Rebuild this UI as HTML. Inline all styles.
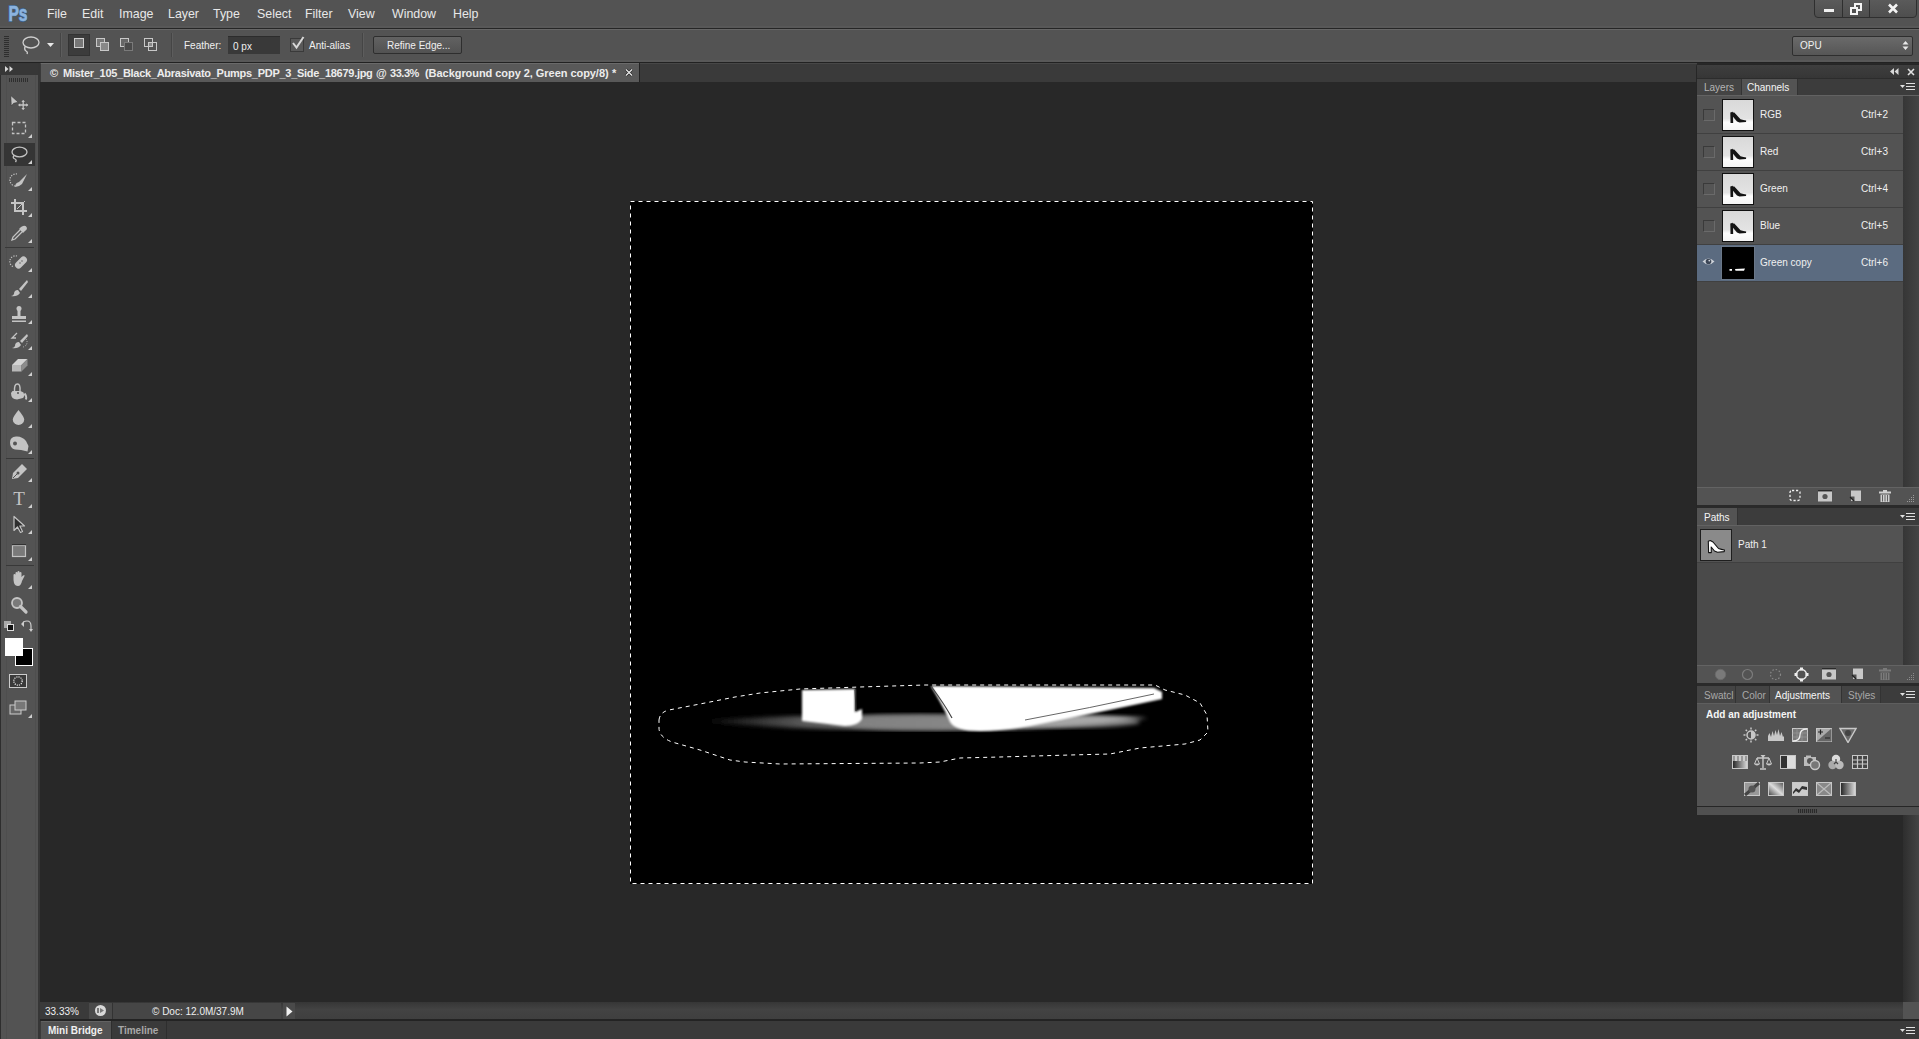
<!DOCTYPE html>
<html><head><meta charset="utf-8">
<style>
*{margin:0;padding:0;box-sizing:border-box}
html,body{width:1919px;height:1039px;overflow:hidden;background:#282828;font-family:"Liberation Sans",sans-serif;}
.a{position:absolute}
.t{position:absolute;white-space:nowrap;color:#e6e6e6}
#menubar{left:0;top:0;width:1919px;height:28px;background:linear-gradient(#535353 0,#535353 26px,#585858 26px)}
#menusep{left:0;top:28px;width:1919px;height:1px;background:#262626}
#opts{left:0;top:29px;width:1919px;height:33px;background:linear-gradient(#666 0,#666 1px,#535353 1px,#535353 31px,#585858 31px)}
#optsep{left:0;top:62px;width:1919px;height:1px;background:#222}
.menu{font-size:12.4px;top:7px;color:#e8e8e8}
</style></head><body>
<div id="menubar" class="a"></div>
<div id="menusep" class="a"></div>
<div id="opts" class="a"></div>
<div id="optsep" class="a"></div>

<!-- Ps logo -->
<svg class="a" style="left:6px;top:2px" width="26" height="22"><text x="2.5" y="19" font-family="Liberation Sans" font-weight="bold" font-size="22" textLength="19" lengthAdjust="spacingAndGlyphs" fill="#3a5f88" stroke="#3a5f88" stroke-width="2.2">Ps</text><text x="2.5" y="19" font-family="Liberation Sans" font-weight="bold" font-size="22" textLength="19" lengthAdjust="spacingAndGlyphs" fill="#8cb3de" stroke="#8cb3de" stroke-width="0.7">Ps</text></svg>
<div class="t menu" style="left:47px">File</div>
<div class="t menu" style="left:82px">Edit</div>
<div class="t menu" style="left:119px">Image</div>
<div class="t menu" style="left:168px">Layer</div>
<div class="t menu" style="left:213px">Type</div>
<div class="t menu" style="left:257px">Select</div>
<div class="t menu" style="left:305px">Filter</div>
<div class="t menu" style="left:348px">View</div>
<div class="t menu" style="left:392px">Window</div>
<div class="t menu" style="left:453px">Help</div>


<!-- options bar content -->
<div class="a" style="left:4px;top:36px;width:5px;height:21px;background:repeating-linear-gradient(#2e2e2e 0 1px,#535353 1px 2px)"></div>
<svg class="a" style="left:20px;top:35px" width="22" height="20" viewBox="0 0 22 20"><ellipse cx="11" cy="7.5" rx="8" ry="5.5" fill="none" stroke="#cfcfcf" stroke-width="1.3"/><path d="M5 11.5 Q4 15 6 16 Q8 17 7 19" fill="none" stroke="#cfcfcf" stroke-width="1.3"/></svg>
<svg class="a" style="left:47px;top:43px" width="8" height="6"><path d="M0 0 H7 L3.5 4 Z" fill="#e8e8e8"/></svg>
<div class="a" style="left:60px;top:33px;width:1px;height:24px;background:#454545"></div>
<div class="a" style="left:61px;top:33px;width:1px;height:24px;background:#5d5d5d"></div>
<div class="a" style="left:68px;top:34px;width:22px;height:22px;background:#3c3c3c;border:1px solid #333"></div>
<div class="a" style="left:74px;top:38px;width:10px;height:10px;border:1px solid #cfcfcf;background:#777"></div>
<svg class="a" style="left:95px;top:37px" width="16" height="16"><rect x="1.5" y="1.5" width="8" height="8" fill="#777" stroke="#c8c8c8"/><rect x="5.5" y="5.5" width="8" height="8" fill="#888" stroke="#c8c8c8"/></svg>
<svg class="a" style="left:119px;top:37px" width="16" height="16"><rect x="1.5" y="1.5" width="8" height="8" fill="#666" stroke="#c8c8c8"/><rect x="5.5" y="5.5" width="8" height="8" fill="#4a4a4a" stroke="#7a7a7a"/></svg>
<svg class="a" style="left:143px;top:37px" width="16" height="16"><rect x="1.5" y="1.5" width="8" height="8" fill="none" stroke="#c8c8c8"/><rect x="5.5" y="5.5" width="8" height="8" fill="none" stroke="#c8c8c8"/><rect x="6" y="6" width="3" height="3" fill="#888"/></svg>
<div class="a" style="left:171px;top:33px;width:1px;height:24px;background:#454545"></div>
<div class="a" style="left:172px;top:33px;width:1px;height:24px;background:#5d5d5d"></div>
<div class="t" style="left:184px;top:40px;font-size:10px;color:#f0f0f0">Feather:</div>
<div class="a" style="left:228px;top:36px;width:52px;height:18px;background:#393939;border-top:1px solid #2c2c2c"></div>
<div class="t" style="left:233px;top:41px;font-size:10px;color:#f0f0f0">0 px</div>
<div class="a" style="left:290px;top:38px;width:14px;height:14px;border:1px solid #3a3a3a;background:#595959"></div>
<svg class="a" style="left:290px;top:35px" width="16" height="16"><path d="M3 8 L6.5 12.5 L13.5 2" fill="none" stroke="#d8d8d8" stroke-width="2"/></svg>
<div class="t" style="left:309px;top:40px;font-size:10px;color:#f0f0f0">Anti-alias</div>
<div class="a" style="left:362px;top:33px;width:1px;height:24px;background:#454545"></div>
<div class="a" style="left:363px;top:33px;width:1px;height:24px;background:#5d5d5d"></div>
<div class="a" style="left:373px;top:36px;width:89px;height:18px;background:linear-gradient(#626262,#525252);border:1px solid #2e2e2e;border-radius:2px"></div>
<div class="t" style="left:387px;top:40px;font-size:10px;color:#f0f0f0">Refine Edge...</div>

<!-- window controls -->
<div class="a" style="left:1814px;top:-3px;width:103px;height:21px;background:linear-gradient(#5c5c5c,#4e4e4e);border:1px solid #2f2f2f;border-radius:0 0 4px 4px"></div>
<div class="a" style="left:1842px;top:0;width:1px;height:17px;background:#2f2f2f"></div>
<div class="a" style="left:1869px;top:0;width:1px;height:17px;background:#2f2f2f"></div>
<div class="a" style="left:1824px;top:9px;width:10px;height:3px;background:#f0f0f0"></div>
<svg class="a" style="left:1849px;top:2px" width="14" height="14"><rect x="6" y="2" width="6" height="6" fill="none" stroke="#f4f4f4" stroke-width="2"/><rect x="2" y="6" width="6" height="6" fill="#505050" stroke="#f4f4f4" stroke-width="2"/></svg>
<svg class="a" style="left:1887px;top:3px" width="12" height="11"><path d="M2 1.5 L10 9.5 M10 1.5 L2 9.5" stroke="#f4f4f4" stroke-width="2.6"/></svg>

<!-- workspace dropdown -->
<div class="a" style="left:1792px;top:36px;width:121px;height:20px;background:linear-gradient(#6a6a6a,#565656);border:1px solid #2e2e2e;border-radius:2px"></div>
<div class="t" style="left:1800px;top:40px;font-size:10px;color:#f0f0f0">OPU</div>
<svg class="a" style="left:1902px;top:40px" width="7" height="11"><path d="M0.5 4.5 L3.5 1 L6.5 4.5 Z M0.5 6.5 L3.5 10 L6.5 6.5Z" fill="#e8e8e8"/></svg>

<!-- tab bar -->
<div class="a" style="left:40px;top:63px;width:1657px;height:19px;background:#3a3a3a;border-top:1px solid #474747"></div>
<div class="a" style="left:41px;top:63px;width:598px;height:19px;background:#595959;border-top:1px solid #6a6a6a"></div>
<div class="a" style="left:639px;top:63px;width:1px;height:19px;background:#222"></div>
<div class="t" style="left:50px;top:67px;font-size:11px;font-weight:bold;color:#ececec">©</div>
<div class="t" style="left:63px;top:67px;font-size:11px;font-weight:bold;color:#ececec;letter-spacing:-0.28px">Mister_105_Black_Abrasivato_Pumps_PDP_3_Side_18679.jpg</div>
<div class="t" style="left:376px;top:67px;font-size:11px;font-weight:bold;color:#ececec">@</div>
<div class="t" style="left:390px;top:67px;font-size:11px;font-weight:bold;color:#ececec;letter-spacing:-0.45px">33.3%</div>
<div class="t" style="left:425px;top:67px;font-size:11px;font-weight:bold;color:#ececec;letter-spacing:-0.05px">(Background copy 2, Green copy/8)</div>
<div class="t" style="left:612px;top:67px;font-size:11px;font-weight:bold;color:#ececec">*</div>
<svg class="a" style="left:624px;top:68px" width="10" height="9"><path d="M2 1.5 L8 7.5 M8 1.5 L2 7.5" stroke="#262626" stroke-width="2.6"/><path d="M2 1.5 L8 7.5 M8 1.5 L2 7.5" stroke="#e8e8e8" stroke-width="1.3"/></svg>

<!-- toolbar -->
<div class="a" style="left:0;top:63px;width:38px;height:12px;background:#373737"></div>
<svg class="a" style="left:5px;top:66px" width="9" height="6"><path d="M0 0 L3.5 3 L0 6Z M4.5 0 L8 3 L4.5 6Z" fill="#d8d8d8"/></svg>
<div class="a" style="left:0;top:75px;width:38px;height:964px;background:#535353"></div>
<div class="a" style="left:0px;top:75px;width:1px;height:964px;background:#2e2e2e"></div>
<div class="a" style="left:6px;top:75px;width:1px;height:964px;background:#4e4e4e"></div>
<div class="a" style="left:35px;top:75px;width:1px;height:964px;background:#4e4e4e"></div>
<div class="a" style="left:9px;top:78px;width:20px;height:4px;background:repeating-linear-gradient(90deg,#2e2e2e 0 1px,#535353 1px 2px)"></div>
<div class="a" style="left:4px;top:143px;width:31px;height:23px;background:#353535"></div>
<div class="a" style="left:5px;top:247px;width:29px;height:1px;background:#383838"></div>
<div class="a" style="left:6px;top:458px;width:28px;height:1px;background:#383838"></div>
<div class="a" style="left:6px;top:565px;width:28px;height:1px;background:#383838"></div>
<svg class="a" style="left:9px;top:92px" width="20" height="20" viewBox="0 0 20 20"><path d="M1.8 3.6 L2.3 14 L4.6 11.3 L9.2 10.2 Z" fill="#c4c4c4" stroke="#2a2a2a" stroke-width="0.5"/><path d="M14.2 8.5 V17.5 M9.7 13 H18.7" stroke="#c4c4c4" stroke-width="1.3"/><path d="M12.4 10 L14.2 8 L16 10Z M12.4 16 L14.2 18 L16 16Z M11.2 11.2 L9.2 13 L11.2 14.8Z M17.2 11.2 L19.2 13 L17.2 14.8Z" fill="#c4c4c4"/></svg>
<svg class="a" style="left:9px;top:118px" width="20" height="20" viewBox="0 0 20 20"><rect x="3.5" y="4.5" width="13" height="11" fill="none" stroke="#c4c4c4" stroke-width="1.3" stroke-dasharray="3 2"/></svg>
<svg class="a" style="left:9px;top:144px" width="20" height="20" viewBox="0 0 20 20"><ellipse cx="10.5" cy="8" rx="7.5" ry="4.8" fill="none" stroke="#c4c4c4" stroke-width="1.3"/><path d="M5 11.5 Q3 14 6 15 Q8 16 6.5 18" fill="none" stroke="#c4c4c4" stroke-width="1.3"/></svg>
<svg class="a" style="left:9px;top:171px" width="20" height="20" viewBox="0 0 20 20"><path d="M8 3 A5 5 0 1 0 6 15" fill="none" stroke="#c4c4c4" stroke-width="1.2" stroke-dasharray="1.2 1.3"/><path d="M18 3 L10 11 Q6 12 6 16 Q10 16 13 13 Z" fill="#c4c4c4"/></svg>
<svg class="a" style="left:9px;top:197px" width="20" height="20" viewBox="0 0 20 20"><path d="M6 2 V14 H18 M2 6 H14 V18" fill="none" stroke="#c4c4c4" stroke-width="2"/><path d="M8 12 L16 4" stroke="#c4c4c4" stroke-width="1"/></svg>
<svg class="a" style="left:9px;top:223px" width="20" height="20" viewBox="0 0 20 20"><path d="M14 3 Q17 2 18 5 Q18 7 16 8 L14 10 L10 6 L12 4 Z" fill="#c4c4c4"/><path d="M11 7 L4 14 L3 17 L6 16 L13 9" fill="none" stroke="#c4c4c4" stroke-width="1.3"/></svg>
<svg class="a" style="left:9px;top:252px" width="20" height="20" viewBox="0 0 20 20"><path d="M8 4 A5 5 0 1 0 5 15" fill="none" stroke="#c4c4c4" stroke-width="1.2" stroke-dasharray="1.2 1.3"/><rect x="5" y="7" width="14" height="7" rx="3.5" transform="rotate(-45 12 10.5)" fill="#c4c4c4"/><circle cx="11" cy="11" r="0.8" fill="#666"/><circle cx="13" cy="9" r="0.8" fill="#666"/></svg>
<svg class="a" style="left:9px;top:278px" width="20" height="20" viewBox="0 0 20 20"><path d="M18 2 L10 11 L12 13 L19 4 Z" fill="#c4c4c4"/><path d="M9 12 Q5 12 5 16 Q4 18 2 18 Q8 19 11 15 Z" fill="#c4c4c4"/></svg>
<svg class="a" style="left:9px;top:304px" width="20" height="20" viewBox="0 0 20 20"><circle cx="10" cy="4.5" r="2.5" fill="#c4c4c4"/><rect x="8.5" y="6" width="3" height="6" fill="#c4c4c4"/><rect x="3" y="12" width="14" height="3" fill="#c4c4c4"/><rect x="3" y="16.5" width="14" height="1.5" fill="#c4c4c4"/></svg>
<svg class="a" style="left:9px;top:330px" width="20" height="20" viewBox="0 0 20 20"><path d="M8 3 L3 8 L7 8" fill="none" stroke="#c4c4c4" stroke-width="1.3"/><path d="M18 4 L11 11 L13 13 L19 6 Z" fill="#c4c4c4"/><path d="M10 12 Q6 12 6 16 Q5 18 3 18 Q9 19 12 15 Z" fill="#c4c4c4"/><path d="M17 9 A5 5 0 0 1 14 17" fill="none" stroke="#c4c4c4" stroke-width="1" stroke-dasharray="1 1.3"/></svg>
<svg class="a" style="left:9px;top:356px" width="20" height="20" viewBox="0 0 20 20"><path d="M3 9 L9 3 H18.5 L12.5 9Z" fill="#d4d4d4"/><path d="M3 9 H12.5 V15.5 H3Z" fill="#b8b8b8"/><path d="M12.5 9 L18.5 3 V9.5 L12.5 15.5Z" fill="#8c8c8c"/></svg>
<svg class="a" style="left:9px;top:382px" width="20" height="20" viewBox="0 0 20 20"><path d="M2 11 Q2 17.5 8 17.5 L14 16 Q16 14 14.5 10.5 L11.5 9 L3.5 9Z" fill="#c4c4c4"/><path d="M5.5 9.5 Q5 2 8.5 2 Q11.5 2 11 9" fill="none" stroke="#c4c4c4" stroke-width="1.4"/><circle cx="9" cy="11" r="1" fill="#555"/><path d="M15.5 11.5 Q17.8 14 17 17.5" fill="none" stroke="#c4c4c4" stroke-width="2"/></svg>
<svg class="a" style="left:9px;top:408px" width="20" height="20" viewBox="0 0 20 20"><path d="M9.5 2 Q15.2 9 15.2 11.5 A5.7 5.4 0 0 1 3.8 11.5 Q3.8 9 9.5 2Z" fill="#c4c4c4"/></svg>
<svg class="a" style="left:9px;top:434px" width="20" height="20" viewBox="0 0 20 20"><path d="M1 8.5 Q1 3 7 2.5 Q13 2 17 7 L19.5 12 L18.5 17.5 Q12 15.5 6 15.5 Q1 14.5 1 8.5Z" fill="#c4c4c4"/><circle cx="6" cy="9.5" r="2" fill="#555"/></svg>
<svg class="a" style="left:9px;top:462px" width="20" height="20" viewBox="0 0 20 20"><path d="M13 2 L18 7 L9 16 L3 17 L4 11 Z" fill="#c4c4c4"/><circle cx="9" cy="11" r="1.5" fill="#555"/><path d="M4 16 L8 12" stroke="#555" stroke-width="1"/></svg>
<svg class="a" style="left:9px;top:488px" width="20" height="20" viewBox="0 0 20 20"><text x="10" y="17" text-anchor="middle" font-family="Liberation Serif" font-size="19" fill="#c4c4c4">T</text></svg>
<svg class="a" style="left:9px;top:514px" width="20" height="20" viewBox="0 0 20 20"><path d="M5 2.5 L5 16.5 L8.5 13 L11.5 18.5 L13.5 17.5 L10.8 12 L15.5 12 Z" fill="#2e2e2e" stroke="#c4c4c4" stroke-width="1.2" stroke-linejoin="round"/></svg>
<svg class="a" style="left:9px;top:541px" width="20" height="20" viewBox="0 0 20 20"><rect x="3.5" y="4.5" width="13" height="11" fill="#7a7a7a" stroke="#c4c4c4" stroke-width="1.2"/><rect x="3" y="3.2" width="14" height="1" fill="#2a2a2a"/></svg>
<svg class="a" style="left:9px;top:569px" width="20" height="20" viewBox="0 0 20 20"><path d="M4.5 11 V6 Q4.5 5 5.5 5 Q6.5 5 6.5 6 V4 Q6.5 3 7.5 3 Q8.5 3 8.5 4 V3 Q8.5 2 9.5 2 Q10.5 2 10.5 3 V4 Q10.5 3 11.5 3 Q12.5 3 12.5 4 V8 L14 6.5 Q15 5.8 15.8 6.6 L13 12 Q12 17 9 17 Q6 17 5 14 Z" fill="#c4c4c4"/></svg>
<svg class="a" style="left:9px;top:595px" width="20" height="20" viewBox="0 0 20 20"><circle cx="8" cy="8" r="5" fill="#7a7a7a" stroke="#c4c4c4" stroke-width="1.8"/><path d="M11.5 11.5 L17 17" stroke="#c4c4c4" stroke-width="3.2" stroke-linecap="round"/></svg>
<svg class="a" style="left:28px;top:134px" width="4" height="4"><path d="M4 0 V4 H0 Z" fill="#d0d0d0"/></svg><svg class="a" style="left:28px;top:160px" width="4" height="4"><path d="M4 0 V4 H0 Z" fill="#d0d0d0"/></svg><svg class="a" style="left:28px;top:187px" width="4" height="4"><path d="M4 0 V4 H0 Z" fill="#d0d0d0"/></svg><svg class="a" style="left:28px;top:213px" width="4" height="4"><path d="M4 0 V4 H0 Z" fill="#d0d0d0"/></svg><svg class="a" style="left:28px;top:239px" width="4" height="4"><path d="M4 0 V4 H0 Z" fill="#d0d0d0"/></svg><svg class="a" style="left:28px;top:268px" width="4" height="4"><path d="M4 0 V4 H0 Z" fill="#d0d0d0"/></svg><svg class="a" style="left:28px;top:294px" width="4" height="4"><path d="M4 0 V4 H0 Z" fill="#d0d0d0"/></svg><svg class="a" style="left:28px;top:320px" width="4" height="4"><path d="M4 0 V4 H0 Z" fill="#d0d0d0"/></svg><svg class="a" style="left:28px;top:346px" width="4" height="4"><path d="M4 0 V4 H0 Z" fill="#d0d0d0"/></svg><svg class="a" style="left:28px;top:372px" width="4" height="4"><path d="M4 0 V4 H0 Z" fill="#d0d0d0"/></svg><svg class="a" style="left:28px;top:398px" width="4" height="4"><path d="M4 0 V4 H0 Z" fill="#d0d0d0"/></svg><svg class="a" style="left:28px;top:424px" width="4" height="4"><path d="M4 0 V4 H0 Z" fill="#d0d0d0"/></svg><svg class="a" style="left:28px;top:450px" width="4" height="4"><path d="M4 0 V4 H0 Z" fill="#d0d0d0"/></svg><svg class="a" style="left:28px;top:478px" width="4" height="4"><path d="M4 0 V4 H0 Z" fill="#d0d0d0"/></svg><svg class="a" style="left:28px;top:504px" width="4" height="4"><path d="M4 0 V4 H0 Z" fill="#d0d0d0"/></svg><svg class="a" style="left:28px;top:530px" width="4" height="4"><path d="M4 0 V4 H0 Z" fill="#d0d0d0"/></svg><svg class="a" style="left:28px;top:557px" width="4" height="4"><path d="M4 0 V4 H0 Z" fill="#d0d0d0"/></svg><svg class="a" style="left:28px;top:585px" width="4" height="4"><path d="M4 0 V4 H0 Z" fill="#d0d0d0"/></svg>
<svg class="a" style="left:3px;top:620px" width="12" height="12"><rect x="1" y="1" width="7" height="7" fill="#aaa"/><rect x="4.5" y="4.5" width="6" height="6" fill="#111" stroke="#ddd"/></svg>
<svg class="a" style="left:21px;top:619px" width="13" height="14"><path d="M2 5 Q2 2 6 2 Q10 2 10 7 V11" fill="none" stroke="#ccc" stroke-width="1.2"/><path d="M0 5 L3 2 L3 8Z M8 10 L12 10 L10 13Z" fill="#ccc"/></svg>
<div class="a" style="left:15px;top:648px;width:18px;height:18px;background:#000;border:1px solid #fff"></div>
<div class="a" style="left:5px;top:638px;width:18px;height:18px;background:#fff"></div>
<svg class="a" style="left:9px;top:674px" width="19" height="15"><rect x="0.5" y="0.5" width="17" height="13" fill="#3a3a3a" stroke="#ccc"/><circle cx="9" cy="7" r="4.2" fill="none" stroke="#f2f2f2" stroke-width="1.2" stroke-dasharray="1.1 1.1"/></svg>
<svg class="a" style="left:9px;top:700px" width="19" height="16"><rect x="1" y="5" width="11" height="9" fill="#666" stroke="#ccc"/><rect x="6" y="1" width="11" height="9" fill="#777" stroke="#ccc"/></svg>
<svg class="a" style="left:28px;top:714px" width="4" height="4"><path d="M4 0 V4 H0 Z" fill="#d0d0d0"/></svg>
<div class="a" style="left:38px;top:63px;width:2px;height:976px;background:#363636"></div>
<!-- document -->
<div class="a" style="left:630px;top:201px;width:683px;height:683px;background:#000"></div>
<svg class="a" style="left:630px;top:201px" width="683" height="683" viewBox="630 201 683 683">
<defs>
<radialGradient id="glow" cx="0.5" cy="0.5" r="0.5">
<stop offset="0" stop-color="#fff" stop-opacity="0.95"/><stop offset="0.6" stop-color="#bbb" stop-opacity="0.55"/><stop offset="1" stop-color="#000" stop-opacity="0"/></radialGradient>
<linearGradient id="shadowL" x1="0" x2="1"><stop offset="0" stop-color="#000"/><stop offset="0.25" stop-color="#666"/><stop offset="1" stop-color="#ccc"/></linearGradient>
<filter id="blur2"><feGaussianBlur stdDeviation="2.2"/></filter>
<filter id="blur1"><feGaussianBlur stdDeviation="0.8"/></filter>
</defs>
<!-- shadow streak -->
<path d="M693 721 Q760 716 830 716 L1000 716 Q1080 714 1148 718 Q1090 726 1000 730 L830 729 Q760 727 693 721 Z" fill="url(#shadowL)" filter="url(#blur2)" opacity="0.9"/>
<ellipse cx="920" cy="722" rx="90" ry="8" fill="#888" filter="url(#blur2)" opacity="0.8"/>
<ellipse cx="1060" cy="722" rx="80" ry="6" fill="#aaa" filter="url(#blur2)" opacity="0.7"/>
<!-- heel -->
<path d="M802 690 L855 689 L855 712 L862 709 L862 719 Q858 726 845 726 L802 721 Z" fill="#fff" filter="url(#blur1)"/>
<path d="M855 690 L856 711" stroke="#333" stroke-width="1"/>
<!-- sole -->
<path d="M931 686 L1154 688 L1162 692 L1162 699 Q1120 708 1050 722 Q1010 731 980 731 Q955 731 950 722 Q945 710 931 686 Z" fill="#fff" filter="url(#blur1)"/>
<path d="M931 686 Q945 705 952 718" stroke="#444" stroke-width="1.2" fill="none"/>
<path d="M1154 694 Q1090 708 1025 720" stroke="#555" stroke-width="0.9" fill="none"/>
<!-- selection -->
<g fill="none" stroke-width="1">
<path d="M630.5 201.5 H1312.5 V883.5 H630.5 Z" stroke="#000"/>
<path d="M630.5 201.5 H1312.5 V883.5 H630.5 Z" stroke="#fff" stroke-dasharray="4 4"/>
<path id="sel" d="M659 720 Q660 712 669 710 L700 704 L735 697 L760 693 L800 689 L860 687 L925 685 L1155 685 L1165 690 L1185 695 L1200 703 L1207 715 L1208 732 L1200 740 L1185 744 L1140 748 L1110 754 L1070 755 L1000 757 L960 758 L940 762 L920 763 L780 764 L745 762 L730 760 L700 750 L672 742 Q659 737 659 728 Z" stroke="#000"/>
<path d="M659 720 Q660 712 669 710 L700 704 L735 697 L760 693 L800 689 L860 687 L925 685 L1155 685 L1165 690 L1185 695 L1200 703 L1207 715 L1208 732 L1200 740 L1185 744 L1140 748 L1110 754 L1070 755 L1000 757 L960 758 L940 762 L920 763 L780 764 L745 762 L730 760 L700 750 L672 742 Q659 737 659 728 Z" stroke="#fff" stroke-dasharray="4 4"/>
</g>
</svg>

<!-- status bar -->
<div class="a" style="left:40px;top:1002px;width:1863px;height:17px;background:linear-gradient(#363636,#434343 45%,#3f3f3f)"></div>
<div class="a" style="left:40px;top:1002px;width:49px;height:17px;background:#3a3a3a"></div>
<div class="t" style="left:45px;top:1006px;font-size:10px;color:#f0f0f0">33.33%</div>
<div class="a" style="left:89px;top:1003px;width:23px;height:16px;background:#4a4a4a"></div>
<svg class="a" style="left:94px;top:1004px" width="13" height="13"><circle cx="6.5" cy="6.5" r="5.5" fill="#d8d8d8"/><rect x="3" y="4" width="2" height="5" fill="#777"/><path d="M6 4 L10 6.5 L6 9Z" fill="#777"/></svg>
<div class="a" style="left:112px;top:1003px;width:1px;height:16px;background:#333"></div>
<div class="a" style="left:113px;top:1003px;width:168px;height:16px;background:#464646"></div>
<div class="t" style="left:152px;top:1006px;font-size:10px;color:#f0f0f0">© Doc: 12.0M/37.9M</div>
<div class="a" style="left:283px;top:1003px;width:12px;height:16px;background:#4a4a4a"></div>
<svg class="a" style="left:286px;top:1006px" width="7" height="11"><path d="M0.5 0.5 L6.5 5.5 L0.5 10.5Z" fill="#f0f0f0"/></svg>
<div class="a" style="left:1903px;top:1002px;width:16px;height:17px;background:#535353"></div>
<div class="a" style="left:40px;top:1019px;width:1879px;height:2px;background:#232323"></div>
<div class="a" style="left:40px;top:1021px;width:1879px;height:18px;background:#3a3a3a"></div>
<div class="a" style="left:41px;top:1021px;width:70px;height:18px;background:#535353;border-top:1px solid #626262"></div>
<div class="t" style="left:48px;top:1025px;font-size:10px;font-weight:bold;color:#f0f0f0">Mini Bridge</div>
<div class="a" style="left:111px;top:1021px;width:1px;height:18px;background:#2e2e2e"></div>
<div class="t" style="left:118px;top:1025px;font-size:10px;font-weight:bold;color:#a8a8a8">Timeline</div>
<div class="a" style="left:166px;top:1021px;width:1px;height:18px;background:#2e2e2e"></div>
<svg class="a" style="left:1900px;top:1026px" width="16" height="10"><path d="M0 3 H5 L2.5 6Z" fill="#e0e0e0"/><path d="M6 1.5 H15 M6 4.5 H15 M6 7.5 H15" stroke="#e0e0e0" stroke-width="1"/></svg>
<!-- right panel -->
<div class="a" style="left:1696px;top:64px;width:223px;height:751px;background:#535353;border-left:1px solid #262626;border-top:1px solid #262626;border-radius:3px 0 0 0"></div>
<div class="a" style="left:1697px;top:65px;width:222px;height:13px;background:linear-gradient(#3e3e3e,#363636)"></div>
<svg class="a" style="left:1890px;top:68px" width="9" height="7"><path d="M4 0 L0 3.5 L4 7Z M8.5 0 L4.5 3.5 L8.5 7Z" fill="#d8d8d8"/></svg>
<svg class="a" style="left:1907px;top:68px" width="8" height="8"><path d="M1 1 L7 7 M7 1 L1 7" stroke="#e0e0e0" stroke-width="1.6"/></svg>
<div class="a" style="left:1697px;top:78px;width:222px;height:17px;background:#3c3c3c;border-top:1px solid #2c2c2c"></div>
<div class="a" style="left:1697px;top:79px;width:44px;height:16px;background:#444"></div>
<div class="t" style="left:1704px;top:82px;font-size:10px;color:#b4b4b4">Layers</div>
<div class="a" style="left:1741px;top:79px;width:1px;height:16px;background:#333"></div>
<div class="a" style="left:1742px;top:79px;width:55px;height:16px;background:#535353"></div>
<div class="t" style="left:1747px;top:82px;font-size:10px;color:#f6f6f6">Channels</div>
<div class="a" style="left:1797px;top:79px;width:1px;height:16px;background:#333"></div>
<svg class="a" style="left:1900px;top:82px" width="16" height="10"><path d="M0 3 H5 L2.5 6Z" fill="#e0e0e0"/><path d="M6 1.5 H15 M6 4.5 H15 M6 7.5 H15" stroke="#e0e0e0" stroke-width="1"/></svg>
<div class="a" style="left:1697px;top:95px;width:222px;height:1px;background:#626262"></div>
<div class="a" style="left:1697px;top:96px;width:206px;height:391px;background:#4a4a4a"></div>
<div class="a" style="left:1903px;top:96px;width:16px;height:391px;background:linear-gradient(90deg,#363636,#444)"></div>
<div class="a" style="left:1697px;top:96px;width:206px;height:37px;background:#535353"></div>
<div class="a" style="left:1697px;top:133px;width:206px;height:1px;background:#404040"></div>
<div class="a" style="left:1703px;top:109px;width:12px;height:12px;border:1px solid;border-color:#3a3a3a #6a6a6a #6a6a6a #3a3a3a;background:#555"></div>
<div class="a" style="left:1722px;top:99px;width:32px;height:32px;background:linear-gradient(#d9d9d9,#e3e3e3 62%,#fdfdfd 74%,#f5f5f5);border:1px solid #111"></div>
<svg class="a" style="left:1722px;top:99px" width="32" height="32"><path d="M8.3 13.6 L10.8 12.8 L11.2 24 L8.5 24 Z M9.5 13.2 L12.3 13.6 L18.5 20.2 Q21.5 21 24.2 21.6 L24 22.9 L17.5 23.6 L15 22.6 L10.8 17.5Z" fill="#141414"/></svg>
<div class="t" style="left:1760px;top:109px;font-size:10px;color:#f0f0f0">RGB</div>
<div class="t" style="left:1861px;top:109px;font-size:10px;color:#f0f0f0">Ctrl+2</div>
<div class="a" style="left:1697px;top:134px;width:206px;height:36px;background:#535353"></div>
<div class="a" style="left:1697px;top:170px;width:206px;height:1px;background:#404040"></div>
<div class="a" style="left:1703px;top:146px;width:12px;height:12px;border:1px solid;border-color:#3a3a3a #6a6a6a #6a6a6a #3a3a3a;background:#555"></div>
<div class="a" style="left:1722px;top:136px;width:32px;height:32px;background:linear-gradient(#d9d9d9,#e3e3e3 62%,#fdfdfd 74%,#f5f5f5);border:1px solid #111"></div>
<svg class="a" style="left:1722px;top:136px" width="32" height="32"><path d="M8.3 13.6 L10.8 12.8 L11.2 24 L8.5 24 Z M9.5 13.2 L12.3 13.6 L18.5 20.2 Q21.5 21 24.2 21.6 L24 22.9 L17.5 23.6 L15 22.6 L10.8 17.5Z" fill="#141414"/></svg>
<div class="t" style="left:1760px;top:146px;font-size:10px;color:#f0f0f0">Red</div>
<div class="t" style="left:1861px;top:146px;font-size:10px;color:#f0f0f0">Ctrl+3</div>
<div class="a" style="left:1697px;top:171px;width:206px;height:36px;background:#535353"></div>
<div class="a" style="left:1697px;top:207px;width:206px;height:1px;background:#404040"></div>
<div class="a" style="left:1703px;top:183px;width:12px;height:12px;border:1px solid;border-color:#3a3a3a #6a6a6a #6a6a6a #3a3a3a;background:#555"></div>
<div class="a" style="left:1722px;top:173px;width:32px;height:32px;background:linear-gradient(#d9d9d9,#e3e3e3 62%,#fdfdfd 74%,#f5f5f5);border:1px solid #111"></div>
<svg class="a" style="left:1722px;top:173px" width="32" height="32"><path d="M8.3 13.6 L10.8 12.8 L11.2 24 L8.5 24 Z M9.5 13.2 L12.3 13.6 L18.5 20.2 Q21.5 21 24.2 21.6 L24 22.9 L17.5 23.6 L15 22.6 L10.8 17.5Z" fill="#141414"/></svg>
<div class="t" style="left:1760px;top:183px;font-size:10px;color:#f0f0f0">Green</div>
<div class="t" style="left:1861px;top:183px;font-size:10px;color:#f0f0f0">Ctrl+4</div>
<div class="a" style="left:1697px;top:208px;width:206px;height:36px;background:#535353"></div>
<div class="a" style="left:1697px;top:244px;width:206px;height:1px;background:#404040"></div>
<div class="a" style="left:1703px;top:220px;width:12px;height:12px;border:1px solid;border-color:#3a3a3a #6a6a6a #6a6a6a #3a3a3a;background:#555"></div>
<div class="a" style="left:1722px;top:210px;width:32px;height:32px;background:linear-gradient(#d9d9d9,#e3e3e3 62%,#fdfdfd 74%,#f5f5f5);border:1px solid #111"></div>
<svg class="a" style="left:1722px;top:210px" width="32" height="32"><path d="M8.3 13.6 L10.8 12.8 L11.2 24 L8.5 24 Z M9.5 13.2 L12.3 13.6 L18.5 20.2 Q21.5 21 24.2 21.6 L24 22.9 L17.5 23.6 L15 22.6 L10.8 17.5Z" fill="#141414"/></svg>
<div class="t" style="left:1760px;top:220px;font-size:10px;color:#f0f0f0">Blue</div>
<div class="t" style="left:1861px;top:220px;font-size:10px;color:#f0f0f0">Ctrl+5</div>
<div class="a" style="left:1697px;top:245px;width:206px;height:36px;background:#5b6b80"></div>
<div class="a" style="left:1697px;top:281px;width:206px;height:1px;background:#404040"></div>
<svg class="a" style="left:1701px;top:256px" width="15" height="11"><path d="M1.5 5.5 Q7.5 -0.5 13.5 5.5 Q7.5 11.5 1.5 5.5Z" fill="#d0d4da"/><circle cx="7.5" cy="5.5" r="2.8" fill="#3c4656"/><circle cx="8.3" cy="4.6" r="0.9" fill="#d0d4da"/></svg>
<div class="a" style="left:1721px;top:246px;width:34px;height:34px;background:#6a7788"></div>
<div class="a" style="left:1722px;top:247px;width:32px;height:32px;background:#000"></div>
<svg class="a" style="left:1722px;top:247px" width="32" height="32"><rect x="7.5" y="22" width="2.5" height="1.8" fill="#fff"/><path d="M13 22 L23 21.6 L22 23.8 L13.5 23.8Z" fill="#fff"/></svg>
<div class="t" style="left:1760px;top:257px;font-size:10px;color:#f0f0f0">Green copy</div>
<div class="t" style="left:1861px;top:257px;font-size:10px;color:#f0f0f0">Ctrl+6</div>

<!-- channels icon bar -->
<div class="a" style="left:1697px;top:487px;width:222px;height:1px;background:#636363"></div>
<div class="a" style="left:1697px;top:488px;width:222px;height:17px;background:#535353"></div>
<svg class="a" style="left:1789px;top:489px" width="12" height="13"><rect x="1" y="1.5" width="10" height="10" rx="2" fill="none" stroke="#f0f0f0" stroke-width="1.3" stroke-dasharray="2.2 1.8"/></svg>
<svg class="a" style="left:1818px;top:490px" width="14" height="12"><rect x="0" y="0" width="14" height="1.5" fill="#2a2a2a"/><rect x="0" y="1.5" width="14" height="10" fill="#c8c8c8"/><circle cx="7" cy="6.5" r="2.6" fill="#555"/></svg>
<svg class="a" style="left:1849px;top:490px" width="13" height="13"><rect x="2" y="0.5" width="10" height="10.5" fill="#c8c8c8"/><path d="M0.5 6.5 H5.5 V12 Z" fill="#535353"/><path d="M1 7 L5 11" stroke="#222" stroke-width="1.2"/></svg>
<svg class="a" style="left:1878px;top:489px" width="14" height="14"><path d="M5 1 H9 V2.5 H13 V4.5 H1 V2.5 H5Z" fill="#d0d0d0"/><path d="M2.5 5.5 H11.5 V13 H2.5Z" fill="#d0d0d0"/><path d="M4.5 6 V12.5 M7 6 V12.5 M9.5 6 V12.5" stroke="#555" stroke-width="0.9"/></svg>
<svg class="a" style="left:1905px;top:493px" width="11" height="11"><path d="M10 1 V10 H1Z" fill="none"/><g fill="#9a9a9a"><rect x="8" y="2" width="1" height="1"/><rect x="6" y="4" width="1" height="1"/><rect x="8" y="4" width="1" height="1"/><rect x="4" y="6" width="1" height="1"/><rect x="6" y="6" width="1" height="1"/><rect x="8" y="6" width="1" height="1"/><rect x="2" y="8" width="1" height="1"/><rect x="4" y="8" width="1" height="1"/><rect x="6" y="8" width="1" height="1"/><rect x="8" y="8" width="1" height="1"/></g></svg>
<div class="a" style="left:1697px;top:505px;width:222px;height:3px;background:#2a2a2a"></div>

<!-- paths panel -->
<div class="a" style="left:1697px;top:508px;width:222px;height:17px;background:#3c3c3c"></div>
<div class="a" style="left:1697px;top:508px;width:40px;height:17px;background:#535353"></div>
<div class="t" style="left:1704px;top:512px;font-size:10px;color:#f6f6f6">Paths</div>
<div class="a" style="left:1737px;top:508px;width:1px;height:17px;background:#333"></div>
<svg class="a" style="left:1900px;top:512px" width="16" height="10"><path d="M0 3 H5 L2.5 6Z" fill="#e0e0e0"/><path d="M6 1.5 H15 M6 4.5 H15 M6 7.5 H15" stroke="#e0e0e0" stroke-width="1"/></svg>
<div class="a" style="left:1697px;top:525px;width:222px;height:1px;background:#626262"></div>
<div class="a" style="left:1697px;top:526px;width:206px;height:139px;background:#4a4a4a"></div>
<div class="a" style="left:1903px;top:526px;width:16px;height:139px;background:linear-gradient(90deg,#363636,#444)"></div>
<div class="a" style="left:1697px;top:526px;width:206px;height:37px;background:#535353;border-bottom:1px solid #404040"></div>
<div class="a" style="left:1700px;top:529px;width:32px;height:32px;background:#8a8a8a;border:1px solid #1e1e1e"></div>
<svg class="a" style="left:1700px;top:529px" width="32" height="32"><path d="M8.3 12.3 L10.3 11.6 L13 13 L18.5 19.5 Q21.5 20.5 24.5 21 L24.2 22.6 L17.5 23.2 L14.5 22 L11.2 18 L11.3 23.6 L8.6 23.6 Z" fill="#fff" stroke="#111" stroke-width="1.1" stroke-linejoin="round"/></svg>
<div class="t" style="left:1738px;top:539px;font-size:10px;color:#f0f0f0">Path 1</div>

<!-- paths icon bar -->
<div class="a" style="left:1697px;top:665px;width:222px;height:1px;background:#636363"></div>
<div class="a" style="left:1697px;top:666px;width:222px;height:17px;background:#535353"></div>
<svg class="a" style="left:1714px;top:668px" width="13" height="13"><circle cx="6.5" cy="6.5" r="5.2" fill="#7a7a7a" stroke="#6a6a6a"/></svg>
<svg class="a" style="left:1741px;top:668px" width="13" height="13"><circle cx="6.5" cy="6.5" r="5" fill="none" stroke="#7c7c7c" stroke-width="1.2"/></svg>
<svg class="a" style="left:1769px;top:668px" width="13" height="13"><circle cx="6.5" cy="6.5" r="5" fill="none" stroke="#888" stroke-width="1.2" stroke-dasharray="1.5 1.8"/></svg>
<svg class="a" style="left:1794px;top:667px" width="15" height="15"><circle cx="7.5" cy="7.5" r="5" fill="none" stroke="#eee" stroke-width="1.3"/><rect x="6" y="0.5" width="3" height="3" fill="#eee"/><rect x="6" y="11.5" width="3" height="3" fill="#eee"/><rect x="0.5" y="6" width="3" height="3" fill="#eee"/><rect x="11.5" y="6" width="3" height="3" fill="#eee"/></svg>
<svg class="a" style="left:1822px;top:668px" width="14" height="12"><rect x="0" y="0" width="14" height="1.5" fill="#2a2a2a"/><rect x="0" y="1.5" width="14" height="10" fill="#c8c8c8"/><circle cx="7" cy="6.5" r="2.6" fill="#555"/></svg>
<svg class="a" style="left:1851px;top:668px" width="13" height="13"><rect x="2" y="0.5" width="10" height="10.5" fill="#c8c8c8"/><path d="M0.5 6.5 H5.5 V12 Z" fill="#535353"/><path d="M1 7 L5 11" stroke="#222" stroke-width="1.2"/></svg>
<svg class="a" style="left:1878px;top:667px" width="14" height="14"><path d="M5 1 H9 V2.5 H13 V4.5 H1 V2.5 H5Z" fill="#7a7a7a"/><path d="M2.5 5.5 H11.5 V13 H2.5Z" fill="#7a7a7a"/><path d="M4.5 6 V12.5 M7 6 V12.5 M9.5 6 V12.5" stroke="#535353" stroke-width="0.9"/></svg>
<svg class="a" style="left:1905px;top:671px" width="11" height="11"><g fill="#8a8a8a"><rect x="8" y="2" width="1" height="1"/><rect x="6" y="4" width="1" height="1"/><rect x="8" y="4" width="1" height="1"/><rect x="4" y="6" width="1" height="1"/><rect x="6" y="6" width="1" height="1"/><rect x="8" y="6" width="1" height="1"/><rect x="2" y="8" width="1" height="1"/><rect x="4" y="8" width="1" height="1"/><rect x="6" y="8" width="1" height="1"/><rect x="8" y="8" width="1" height="1"/></g></svg>
<div class="a" style="left:1697px;top:683px;width:222px;height:3px;background:#2a2a2a"></div>

<!-- adjustments panel -->
<div class="a" style="left:1697px;top:686px;width:222px;height:17px;background:#3c3c3c"></div>
<div class="a" style="left:1697px;top:686px;width:38px;height:17px;background:#444"></div>
<div class="t" style="left:1704px;top:690px;font-size:10px;color:#a8a8a8">Swatcl</div>
<div class="a" style="left:1735px;top:686px;width:1px;height:17px;background:#333"></div>
<div class="a" style="left:1736px;top:686px;width:33px;height:17px;background:#444"></div>
<div class="t" style="left:1742px;top:690px;font-size:10px;color:#a8a8a8">Color</div>
<div class="a" style="left:1769px;top:686px;width:1px;height:17px;background:#333"></div>
<div class="a" style="left:1770px;top:686px;width:71px;height:17px;background:#535353"></div>
<div class="t" style="left:1775px;top:690px;font-size:10px;color:#f6f6f6">Adjustments</div>
<div class="a" style="left:1841px;top:686px;width:1px;height:17px;background:#333"></div>
<div class="a" style="left:1842px;top:686px;width:38px;height:17px;background:#444"></div>
<div class="t" style="left:1848px;top:690px;font-size:10px;color:#a8a8a8">Styles</div>
<div class="a" style="left:1880px;top:686px;width:1px;height:17px;background:#333"></div>
<svg class="a" style="left:1900px;top:690px" width="16" height="10"><path d="M0 3 H5 L2.5 6Z" fill="#e0e0e0"/><path d="M6 1.5 H15 M6 4.5 H15 M6 7.5 H15" stroke="#e0e0e0" stroke-width="1"/></svg>
<div class="a" style="left:1697px;top:703px;width:222px;height:103px;background:#535353;border-top:1px solid #5e5e5e"></div>
<div class="t" style="left:1706px;top:709px;font-size:10px;font-weight:bold;color:#f6f6f6">Add an adjustment</div>
<svg class="a" style="left:1742px;top:727px" width="18" height="16" viewBox="0 0 18 16"><circle cx="9" cy="8" r="4" fill="none" stroke="#c8c8c8" stroke-width="1.5"/><path d="M9 4 A4 4 0 0 1 9 12Z" fill="#c8c8c8"/><path d="M9 0.5 V2.5 M9 13.5 V15.5 M1.5 8 H3.5 M14.5 8 H16.5 M3.7 2.7 L5 4 M13 12 L14.3 13.3 M3.7 13.3 L5 12 M13 4 L14.3 2.7" stroke="#c8c8c8" stroke-width="1.5"/></svg>
<svg class="a" style="left:1767px;top:727px" width="18" height="16" viewBox="0 0 18 16"><path d="M1 14 V9 L2.5 6 L4 10 L5.5 4 L7 9 L8.5 3 L10 8 L11.5 2 L13 9 L14.5 5 L16 10 L17 9 V14Z" fill="#c8c8c8"/></svg>
<svg class="a" style="left:1791px;top:727px" width="18" height="16" viewBox="0 0 18 16"><rect x="1.5" y="1.5" width="15" height="13" fill="#7a7a7a" stroke="#c8c8c8"/><path d="M1.5 6 H16.5 M1.5 10 H16.5 M6 1.5 V14.5 M11 1.5 V14.5" stroke="#9a9a9a" stroke-width="0.7"/><path d="M2 14 Q9 14 9 8 Q9 2 16 2" fill="none" stroke="#eee" stroke-width="1.3"/></svg>
<svg class="a" style="left:1815px;top:727px" width="18" height="16" viewBox="0 0 18 16"><rect x="1.5" y="1.5" width="15" height="13" fill="#aaa" stroke="#c8c8c8"/><path d="M1.5 14.5 L16.5 1.5 V14.5Z" fill="#666"/><path d="M3 5 H8 M5.5 2.5 V7.5 M10 11 H15" stroke="#222" stroke-width="1.2"/></svg>
<svg class="a" style="left:1839px;top:727px" width="18" height="16" viewBox="0 0 18 16"><path d="M1 1.5 H17 L9 15.5Z" fill="#6a6a6a" stroke="#c8c8c8" stroke-width="1.4"/><circle cx="9" cy="6" r="3" fill="#444"/></svg>
<svg class="a" style="left:1731px;top:754px" width="18" height="16" viewBox="0 0 18 16"><rect x="1.5" y="1.5" width="15" height="13" fill="url(#g1)" stroke="#c8c8c8"/><defs><linearGradient id="g1" x1="0" x2="1"><stop offset="0" stop-color="#222"/><stop offset="1" stop-color="#ddd"/></linearGradient></defs><path d="M2 2 H16 V7 H2Z" fill="#999"/><path d="M5 2 V7 M9 2 V7 M13 2 V7" stroke="#eee" stroke-width="1.2"/></svg>
<svg class="a" style="left:1754px;top:754px" width="18" height="16" viewBox="0 0 18 16"><path d="M9 1 V14 M3 4 H15 M6 15 H12" stroke="#c8c8c8" stroke-width="1.4"/><path d="M3 4 L0.5 10 H5.5Z M15 4 L12.5 10 H17.5Z" fill="none" stroke="#c8c8c8"/><path d="M0.5 10 Q3 13 5.5 10Z M12.5 10 Q15 13 17.5 10Z" fill="#c8c8c8"/><path d="M6.5 1 H11.5 L9 4Z" fill="#c8c8c8"/></svg>
<svg class="a" style="left:1779px;top:754px" width="18" height="16" viewBox="0 0 18 16"><rect x="1.5" y="1.5" width="15" height="13" fill="#ddd" stroke="#c8c8c8"/><rect x="2" y="2" width="6" height="12" fill="#333"/></svg>
<svg class="a" style="left:1803px;top:754px" width="18" height="17" viewBox="0 0 18 17"><rect x="1" y="3" width="12" height="9" fill="#bbb"/><rect x="3" y="1.5" width="5" height="2" fill="#bbb"/><circle cx="7" cy="7" r="3" fill="#555"/><circle cx="12" cy="11" r="4.5" fill="#777" stroke="#c8c8c8" stroke-width="1.4"/></svg>
<svg class="a" style="left:1827px;top:754px" width="18" height="16" viewBox="0 0 18 16"><circle cx="9" cy="5" r="4.2" fill="#ddd"/><circle cx="5.5" cy="11" r="4.2" fill="#aaa"/><circle cx="12.5" cy="11" r="4.2" fill="#bbb"/><path d="M9 8 L7 10 M9 8 L11 10 M9 8 V5" stroke="#444" stroke-width="1.2"/></svg>
<svg class="a" style="left:1851px;top:754px" width="18" height="16" viewBox="0 0 18 16"><rect x="1.5" y="1.5" width="15" height="13" fill="#444" stroke="#c8c8c8"/><path d="M1.5 6 H16.5 M1.5 10 H16.5 M6.5 1.5 V14.5 M11.5 1.5 V14.5" stroke="#c8c8c8" stroke-width="1.2"/></svg>
<svg class="a" style="left:1743px;top:781px" width="18" height="16" viewBox="0 0 18 16"><rect x="1.5" y="1.5" width="15" height="13" fill="#999" stroke="#c8c8c8"/><path d="M2 14 L16 2" stroke="#444" stroke-width="3"/><circle cx="9" cy="8" r="3.5" fill="#555"/></svg>
<svg class="a" style="left:1767px;top:781px" width="18" height="16" viewBox="0 0 18 16"><defs><linearGradient id="g2" x1="0" y1="1" x2="1" y2="0"><stop offset="0" stop-color="#444"/><stop offset="0.5" stop-color="#ddd"/><stop offset="1" stop-color="#555"/></linearGradient></defs><rect x="1.5" y="1.5" width="15" height="13" fill="url(#g2)" stroke="#c8c8c8"/></svg>
<svg class="a" style="left:1791px;top:781px" width="18" height="16" viewBox="0 0 18 16"><rect x="1.5" y="1.5" width="15" height="13" fill="#ccc" stroke="#c8c8c8"/><path d="M2 11 L5 7 L8 9 L11 5 L16 6 V9 L11 8 L8 12 L5 10 L2 13Z" fill="#333"/></svg>
<svg class="a" style="left:1815px;top:781px" width="18" height="16" viewBox="0 0 18 16"><rect x="1.5" y="1.5" width="15" height="13" fill="#888" stroke="#c8c8c8"/><path d="M2 2 L9 8 L16 2 M2 14 L9 8 L16 14" stroke="#bbb" stroke-width="1.3" fill="none"/></svg>
<svg class="a" style="left:1839px;top:781px" width="18" height="16" viewBox="0 0 18 16"><defs><linearGradient id="g3" x1="0" x2="1"><stop offset="0" stop-color="#222"/><stop offset="1" stop-color="#ddd"/></linearGradient></defs><rect x="1.5" y="1.5" width="15" height="13" fill="url(#g3)" stroke="#c8c8c8"/></svg>

<div class="a" style="left:1697px;top:806px;width:222px;height:1px;background:#262626"></div>
<div class="a" style="left:1697px;top:807px;width:222px;height:8px;background:#505050"></div>
<div class="a" style="left:1798px;top:809px;width:19px;height:4px;background:repeating-linear-gradient(90deg,#2a2a2a 0 1px,#4a4a4a 1px 2px)"></div>
<div class="a" style="left:1903px;top:815px;width:16px;height:187px;background:linear-gradient(90deg,#2e2e2e,#444)"></div>
</body></html>
